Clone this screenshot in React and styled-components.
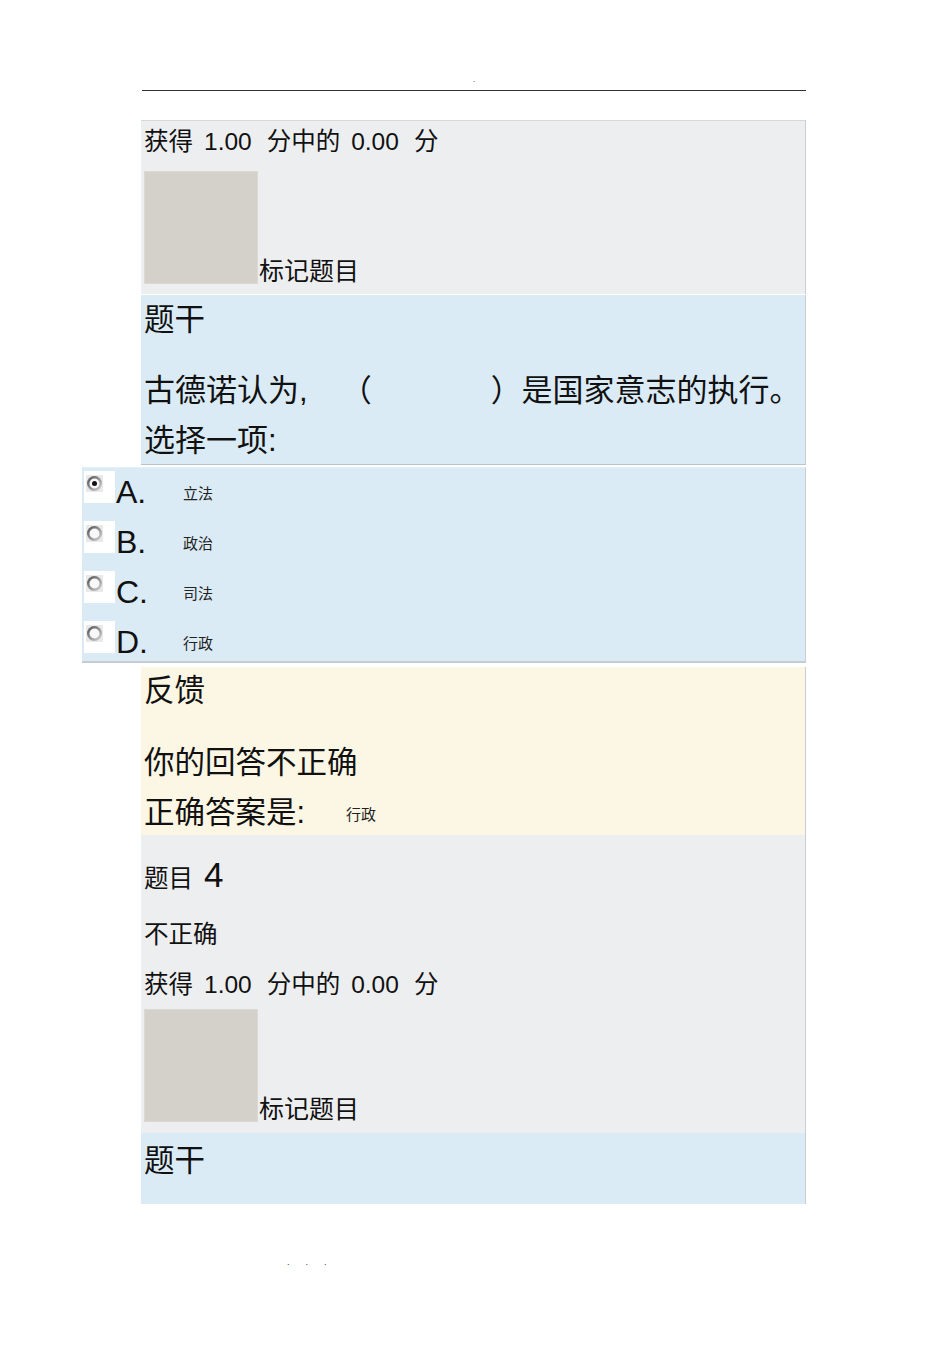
import React from "react";
import styled, { createGlobalStyle } from "styled-components";

const Global = createGlobalStyle`
  body {
    margin: 0;
    background: #fff;
    font-family: "Liberation Sans", "Noto Sans CJK SC", sans-serif;
    color: #111;
  }
`;

const Page = styled.div`
  width: 665px;
  margin-left: 141px;
  padding-top: 72px;
`;

const Header = styled.div`
  height: 18px;
  border-bottom: 1px solid #333;
  text-align: center;
  font-size: 9px;
  line-height: 14px;
  color: #666;
  margin-left: 1px;
  margin-bottom: 29px;
`;

const Panel = styled.div`
  background: ${(p) => p.bg};
  border-right: 1px solid #c9ccd0;
  padding: ${(p) => p.pad || "0"};
  padding-left: 3px;
  ${(p) => p.top && `border-top: 1px solid ${p.top};`}
  ${(p) => p.bottom && `border-bottom: 1px solid ${p.bottom};`}
`;

const Line = styled.div`
  font-size: ${(p) => p.size || 24.5}px;
  line-height: ${(p) => p.lh || 46}px;
  height: ${(p) => p.lh || 46}px;
  margin-top: ${(p) => p.mt || 0}px;
  white-space: nowrap;
`;

const Num = styled.span`
  margin: 0 15px 0 11px;
`;

const Big = styled.span`
  font-size: 35px;
  margin-left: 11px;
`;

const Gap = styled.span`
  display: inline-block;
  width: ${(p) => p.w}px;
`;

const FlagRow = styled.div`
  display: flex;
  align-items: flex-end;
  margin-top: ${(p) => p.mt}px;
`;

const FlagBox = styled.div`
  width: 114px;
  height: 113px;
  background: #d4d0ca;
  border: 1px solid #dcd9d4;
  box-sizing: border-box;
`;

const FlagLabel = styled.span`
  font-size: 25px;
  line-height: 26px;
  margin-left: 1px;
`;

const Options = styled.div`
  margin-left: -59px;
  margin-top: 2px;
  background: #dbebf6;
  border-top: 1px solid #e4eff8;
  border-right: 1px solid #c9ccd0;
  border-bottom: 2px solid #c5ccd3;
  padding: 3px 0 8px 2px;
  display: flex;
  flex-direction: column;
  gap: 18px;
`;

const Row = styled.div`
  display: flex;
  align-items: flex-start;
  height: 32px;
`;

const RadioBox = styled.div`
  width: 31px;
  height: 32px;
  background: #fff;
  padding: 4px 0 0 2px;
  box-sizing: border-box;
`;

const Letter = styled.span`
  font-size: 32px;
  line-height: 32px;
  margin-top: 5px;
  margin-left: 1px;
  width: 67px;
`;

const OptText = styled.span`
  font-size: 15px;
  line-height: 20px;
  margin-top: 13px;
  color: #222;
`;

const Answer = styled.span`
  font-size: 15px;
  margin-left: 41px;
  vertical-align: 3px;
  color: #222;
`;

const Footer = styled.div`
  display: flex;
  gap: 16px;
  padding: 53px 0 0 146px;
  font-size: 9px;
  color: #333;
`;

const Radio = ({ checked }) => (
  <svg width="17" height="17" viewBox="0 0 17 17">
    <defs>
      <linearGradient id="rg" x1="0" y1="0" x2="1" y2="1">
        <stop offset="0" stopColor="#4a4a4a" />
        <stop offset="0.55" stopColor="#9a9a9a" />
        <stop offset="1" stopColor="#dcdcdc" />
      </linearGradient>
    </defs>
    <rect x="0" y="0" width="17" height="17" fill="#e9e9e9" />
    <circle cx="8.5" cy="8.5" r="7.5" fill="url(#rg)" />
    <circle cx="8.5" cy="8.5" r="5" fill="#f8f8f8" />
    {checked && <circle cx="8.5" cy="8.5" r="2.5" fill="#111" />}
  </svg>
);

const options = [
  ["A.", "立法", true],
  ["B.", "政治"],
  ["C.", "司法"],
  ["D.", "行政"],
];

export default function App() {
  return (
    <>
      <Global />
      <Page>
        <Header>.</Header>
        <Panel bg="#edeef0" top="#d6d7d9" pad="0 0 10px 3px">
          <Line lh={42}>
            获得<Num>1.00</Num>分中的<Num>0.00</Num>分
          </Line>
          <FlagRow mt={8}>
            <FlagBox />
            <FlagLabel>标记题目</FlagLabel>
          </FlagRow>
        </Panel>
        <Panel bg="#dbebf6" bottom="#b9c3cb">
          <Line size={30.5} lh={48} mt={1}>题干</Line>
          <Line size={31} lh={48} mt={24}>
            古德诺认为,<Gap w={33} />（<Gap w={119} />）是国家意志的执行。
          </Line>
          <Line size={31} lh={46} mt={3}>选择一项:</Line>
        </Panel>
        <Options>
          {options.map(([l, t, c]) => (
            <Row key={l}>
              <RadioBox>
                <Radio checked={c} />
              </RadioBox>
              <Letter>{l}</Letter>
              <OptText>{t}</OptText>
            </Row>
          ))}
        </Options>
        <div style={{ height: 4 }} />
        <Panel bg="#fcf7e5">
          <Line size={30.5} lh={46}>反馈</Line>
          <Line size={30.5} lh={46} mt={26}>你的回答不正确</Line>
          <Line size={30.5} lh={46} mt={4}>
            正确答案是:<Answer>行政</Answer>
          </Line>
        </Panel>
        <Panel bg="#edeef0" pad="17px 0 11px 3px">
          <Line lh={46}>
            题目<Big>4</Big>
          </Line>
          <Line lh={46} mt={14}>不正确</Line>
          <Line lh={46} mt={4}>
            获得<Num>1.00</Num>分中的<Num>0.00</Num>分
          </Line>
          <FlagRow mt={1}>
            <FlagBox />
            <FlagLabel>标记题目</FlagLabel>
          </FlagRow>
        </Panel>
        <Panel bg="#dbebf6" pad="3px 0 20px 3px">
          <Line size={30.5} lh={48}>题干</Line>
        </Panel>
        <Footer>
          <span>.</span>
          <span>.</span>
          <span>.</span>
        </Footer>
      </Page>
    </>
  );
}
